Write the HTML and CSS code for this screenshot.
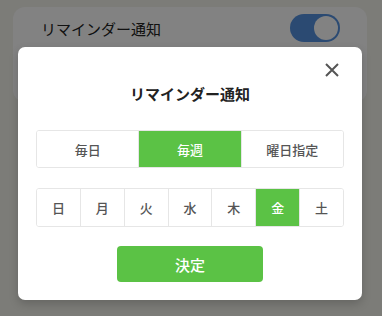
FILE: index.html
```html
<!DOCTYPE html>
<html lang="ja">
<head>
  <meta charset="UTF-8" />
  <meta name="viewport" content="width=device-width, initial-scale=1.0" />
  <title>リマインダー通知</title>
  <link rel="stylesheet" href="styles.css">
</head>
<body>
  <div class="page">
    <div class="setting-card">
      <span class="setting-label">リマインダー通知</span>
      <span class="toggle"><span class="toggle-knob"></span></span>
    </div>
  </div>

  <div class="overlay"></div>

  <div class="modal">
    <button class="close-btn" aria-label="閉じる">
      <svg width="14" height="14" viewBox="0 0 14 14">
        <path d="M1 1L13 13M13 1L1 13" stroke="#555" stroke-width="2" stroke-linecap="butt" />
      </svg>
    </button>

    <div class="modal-title">リマインダー通知</div>

    <div class="segment">
      <button class="segment-item">毎日</button>
      <button class="segment-item active">毎週</button>
      <button class="segment-item">曜日指定</button>
    </div>

    <div class="days">
      <button class="day">日</button>
      <button class="day">月</button>
      <button class="day">火</button>
      <button class="day">水</button>
      <button class="day">木</button>
      <button class="day active">金</button>
      <button class="day">土</button>
    </div>

    <button class="submit-btn">決定</button>
  </div>
</body>
</html>
```

FILE: styles.css
```css
* {
  box-sizing: border-box;
  margin: 0;
  padding: 0;
  font-family: 'Noto Sans CJK JP', 'Noto Sans', sans-serif;
}

body {
  background-color: #f3f3ec;
  color: #333;
  width: 382px;
  height: 316px;
  overflow: hidden;
  position: relative;
}

.page {
  padding: 7px 15px 0 13px;
}

.setting-card {
  background-color: #ffffff;
  border-radius: 12px;
  height: 95px;
  padding: 8px 27px 0 28px;
  display: flex;
  justify-content: space-between;
  align-items: flex-start;
}

.setting-label {
  font-size: 15px;
  line-height: 28px;
  color: #222;
}

.toggle {
  width: 50px;
  height: 28px;
  border-radius: 14px;
  background-color: #5592e0;
  display: flex;
  align-items: center;
  justify-content: flex-end;
  padding: 2px;
  margin-top: -1px;
}

.toggle-knob {
  width: 24px;
  height: 24px;
  border-radius: 50%;
  background-color: #ffffff;
}

.overlay {
  position: absolute;
  inset: 0;
  background-color: rgba(0, 0, 0, 0.49);
}

.modal {
  position: absolute;
  left: 18px;
  top: 47px;
  width: 344px;
  height: 253px;
  background-color: white;
  border-radius: 7px;
  box-shadow: 0 4px 10px rgba(0, 0, 0, 0.18);
  padding: 35px 18px 0;
  display: flex;
  flex-direction: column;
  align-items: center;
}

.close-btn {
  position: absolute;
  top: 16px;
  right: 23px;
  background: none;
  border: none;
  width: 14px;
  height: 14px;
  cursor: pointer;
  display: flex;
}

.modal-title {
  font-size: 15px;
  font-weight: bold;
  line-height: 24px;
  color: #222;
}

.segment {
  margin-top: 24px;
  width: 100%;
  height: 38px;
  display: flex;
  border: 1px solid #e6e6e6;
  border-radius: 3px;
  overflow: hidden;
}

.segment-item {
  flex: 1;
  border: none;
  background: white;
  font-size: 13px;
  font-weight: 500;
  color: #555;
  cursor: pointer;
}

.segment-item + .segment-item {
  border-left: 1px solid #e6e6e6;
}

.segment-item.active,
.day.active {
  background-color: #5bc245;
  color: white;
}

.days {
  margin-top: 20px;
  width: 100%;
  height: 39px;
  display: flex;
  border: 1px solid #e6e6e6;
  border-radius: 3px;
  overflow: hidden;
}

.day {
  flex: 1;
  border: none;
  background: white;
  font-size: 13px;
  font-weight: 500;
  color: #555;
  cursor: pointer;
}

.day + .day {
  border-left: 1px solid #e6e6e6;
}

.submit-btn {
  margin-top: 19px;
  width: 146px;
  height: 36px;
  border: none;
  border-radius: 4px;
  background-color: #5bc245;
  color: white;
  font-size: 15px;
  font-weight: 500;
  cursor: pointer;
}
```
